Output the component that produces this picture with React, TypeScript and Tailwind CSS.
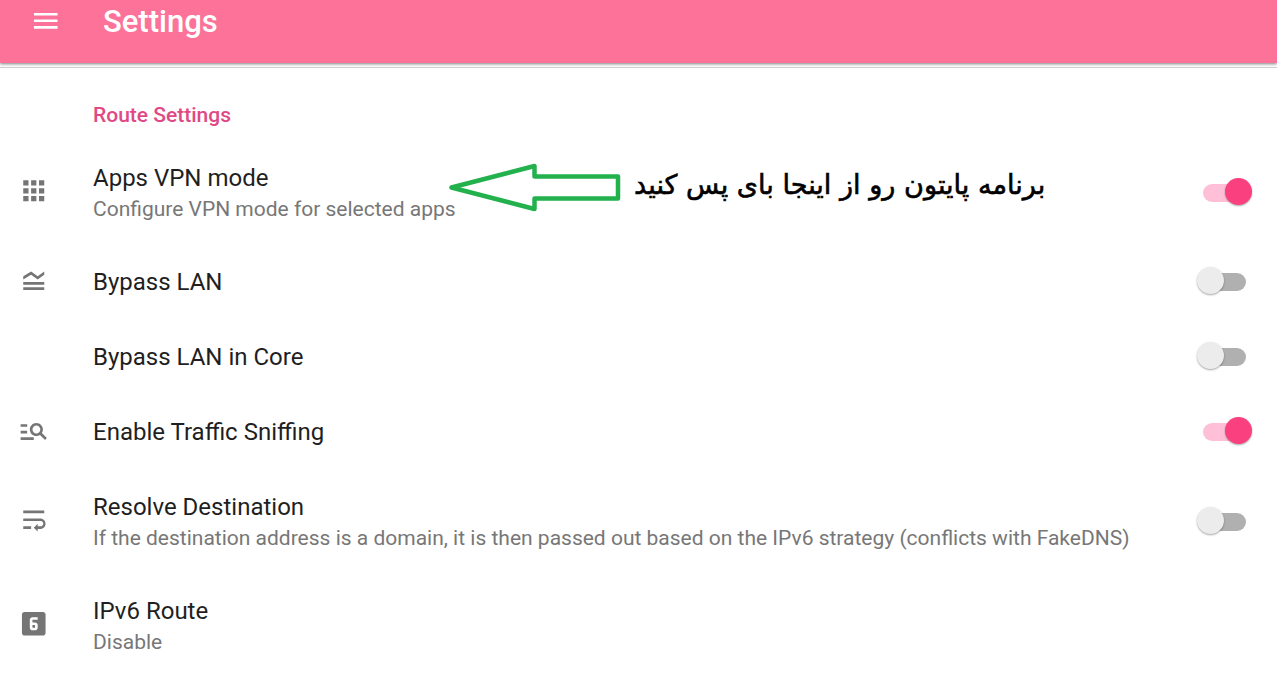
import type { ReactNode } from "react";

function Icon({ d, className = "" }: { d: string; className?: string }) {
  return (
    <svg viewBox="0 0 24 24" className={`size-[31.5px] shrink-0 fill-current ${className}`}>
      <path d={d} />
    </svg>
  );
}

const icons = {
  menu: "M3 18h18v-2H3v2zm0-5h18v-2H3v2zm0-7v2h18V6H3z",
  apps: "M4 8h4V4H4v4zm6 12h4v-4h-4v4zm-6 0h4v-4H4v4zm0-6h4v-4H4v4zm6 0h4v-4h-4v4zm6-10v4h4V4h-4zm-6 4h4V4h-4v4zm6 6h4v-4h-4v4zm0 6h4v-4h-4v4z",
  legend:
    "M20 15H4v-2h16v2zm0 2H4v2h16v-2zm-5-6l5-3.55V5l-5 3.55L10 5 4 8.66V11l5.92-3.61L15 11z",
  search:
    "M7 9H2V7h5v2zm0 3H2v2h5v-2zm13.59 7l-3.83-3.83c-.8.52-1.74.83-2.76.83-2.76 0-5-2.24-5-5s2.24-5 5-5 5 2.24 5 5c0 1.02-.31 1.96-.83 2.75L22 17.59 20.59 19zM17 11c0-1.65-1.35-3-3-3s-3 1.35-3 3 1.35 3 3 3 3-1.35 3-3zM2 19h10v-2H2v2z",
  wrap: "M4 19h6v-2H4v2zM20 5H4v2h16V5zm-3 6H4v2h13.25c1.1 0 2 .9 2 2s-.9 2-2 2H15v-2l-3 3 3 3v-2h2c2.21 0 4-1.79 4-4s-1.79-4-4-4z",
  six: "M11 15h2v-2h-2v2zm8-12H5c-1.1 0-2 .9-2 2v14c0 1.1.9 2 2 2h14c1.1 0 2-.9 2-2V5c0-1.1-.9-2-2-2zm-4 6h-4v2h2c1.1 0 2 .89 2 2v2c0 1.11-.9 2-2 2h-2c-1.11 0-2-.89-2-2V9c0-1.11.89-2 2-2h4v2z",
};

function Toggle({ on }: { on: boolean }) {
  return on ? (
    <div role="switch" aria-checked="true" className="mr-[25.5px] mb-1 flex items-center">
      <div className="mt-[3px] -mr-[21px] h-[18px] w-[43px] rounded-full bg-[#ffc0d7]" />
      <div className="size-[27px] rounded-full bg-[#fb4080] shadow-[0_1px_2px_rgba(0,0,0,0.35)]" />
    </div>
  ) : (
    <div role="switch" aria-checked="false" className="mr-[31.5px] mb-1 flex items-center">
      <div className="z-10 size-[27px] rounded-full bg-[#ececec] shadow-[0_1px_2px_rgba(0,0,0,0.35)]" />
      <div className="mt-[3px] -ml-[21px] h-[18px] w-[43px] rounded-full bg-[#b0b0b0]" />
    </div>
  );
}

interface RowProps {
  icon?: string;
  title: string;
  summary?: string;
  on?: boolean;
  children?: ReactNode;
}

function Row({ icon, title, summary, on, children }: RowProps) {
  return (
    <div className={`relative flex items-center ${summary ? "h-[104px]" : "h-[75px]"}`}>
      <div className={`w-[93px] shrink-0 pl-[17.5px] text-[#757575] ${summary ? "pb-[5px]" : "pb-[4px]"}`}>
        {icon && <Icon d={icon} />}
      </div>
      <div className={`flex-1 whitespace-nowrap ${summary ? "pt-[2px]" : ""}`}>
        <div className="text-[24px] leading-[31px] text-[#1f1f1f]">{title}</div>
        {summary && <div className="text-[21px] leading-[31px] text-[#777777]">{summary}</div>}
      </div>
      {on !== undefined && <Toggle on={on} />}
      {children}
    </div>
  );
}

export default function App() {
  return (
    <div className="h-[677px] w-full overflow-hidden bg-white font-[Roboto,sans-serif]">
      <header className="flex h-[63px] items-start bg-[#fc7298] text-white shadow-[0_1px_3px_rgba(0,0,0,0.5)]">
        <Icon d={icons.menu} className="mt-[4.5px] ml-[30px]" />
        <h1 className="ml-[41.5px] text-[31px] leading-[43px] font-medium">Settings</h1>
      </header>
      <div className="mt-1 h-px bg-[#cdd2d0]" />
      <main>
        <h2 className="flex h-[73px] items-center pt-[23px] pl-[93px] text-[21px] font-medium text-[#e04984]">
          Route Settings
        </h2>
        <Row icon={icons.apps} title="Apps VPN mode" summary="Configure VPN mode for selected apps" on={true}>
          <div className="absolute top-[21px] left-[448px] flex items-start">
            <svg viewBox="0 0 174 52" className="h-[52px] w-[174px]">
              <path
                d="M3.5 25.5L86.5 4V14.5H170V36.5H86.5V47Z"
                fill="white"
                stroke="#22b14c"
                strokeWidth="4.5"
                strokeLinejoin="round"
              />
            </svg>
            <p
              dir="rtl"
              lang="fa"
              className="ml-3 text-[27.1px] leading-[46px] whitespace-nowrap text-black [-webkit-text-stroke:0.6px_black] font-['DejaVu_Sans',sans-serif]"
            >
              برنامه پایتون رو از اینجا بای پس کنید
            </p>
          </div>
        </Row>
        <Row icon={icons.legend} title="Bypass LAN" on={false} />
        <Row title="Bypass LAN in Core" on={false} />
        <Row icon={icons.search} title="Enable Traffic Sniffing" on={true} />
        <Row
          icon={icons.wrap}
          title="Resolve Destination"
          summary="If the destination address is a domain, it is then passed out based on the IPv6 strategy (conflicts with FakeDNS)"
          on={false}
        />
        <Row icon={icons.six} title="IPv6 Route" summary="Disable" />
      </main>
    </div>
  );
}
